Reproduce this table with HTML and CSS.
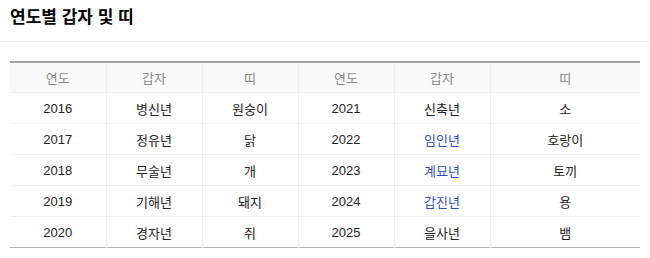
FILE: index.html
```html
<!DOCTYPE html>
<html lang="ko">
<head>
<meta charset="utf-8">
<link rel="stylesheet" href="styles.css">
</head>
<body>
<div class="head"><h2 class="title">연도별 갑자 및 띠</h2></div>
<div class="content">
<table class="zodiac">
<colgroup>
<col class="c"><col class="c"><col class="c"><col class="c"><col class="c"><col class="cw">
</colgroup>
<thead>
<tr><th>연도</th><th>갑자</th><th>띠</th><th>연도</th><th>갑자</th><th>띠</th></tr>
</thead>
<tbody>
<tr><td>2016</td><td>병신년</td><td>원숭이</td><td>2021</td><td>신축년</td><td>소</td></tr>
<tr><td>2017</td><td>정유년</td><td>닭</td><td>2022</td><td class="link">임인년</td><td>호랑이</td></tr>
<tr><td>2018</td><td>무술년</td><td>개</td><td>2023</td><td class="link">계묘년</td><td>토끼</td></tr>
<tr><td>2019</td><td>기해년</td><td>돼지</td><td>2024</td><td class="link">갑진년</td><td>용</td></tr>
<tr><td>2020</td><td>경자년</td><td>쥐</td><td>2025</td><td>을사년</td><td>뱀</td></tr>
</tbody>
</table>
</div>
</body>
</html>
```
FILE: styles.css
```css
html, body { margin: 0; padding: 0; background: #fff; }
body {
  font-family: "Liberation Sans", "Noto Sans CJK KR", sans-serif;
  color: #222;
}
.head {
  padding: 7px 10px 12px;
  border-bottom: 1px solid #ededed;
}
.title {
  margin: 0;
  font-size: 17px;
  line-height: 22px;
  font-weight: bold;
  color: #000;
}
.content {
  padding: 19px 10px 0;
}
.zodiac {
  width: 630px;
  border-collapse: collapse;
  table-layout: fixed;
  border-top: 2px solid #a3a3a8;
  border-bottom: 1px solid #b5b5b8;
  font-size: 13px;
}
.zodiac col.c { width: 96px; }
.zodiac col.cw { width: 150px; }
.zodiac th, .zodiac td {
  text-align: center;
  padding: 0;
  border-left: 1px solid #efefef;
  border-bottom: 1px solid #efefef;
}
.zodiac th:first-child, .zodiac td:first-child { border-left: none; }
.zodiac th {
  height: 29px;
  background: #f9f9f9;
  color: #888;
  font-weight: normal;
}
.zodiac td {
  height: 30px;
  color: #222;
}
.zodiac tbody tr:last-child td { border-bottom: none; }
.zodiac td.link { color: #2f4fbf; }
```
